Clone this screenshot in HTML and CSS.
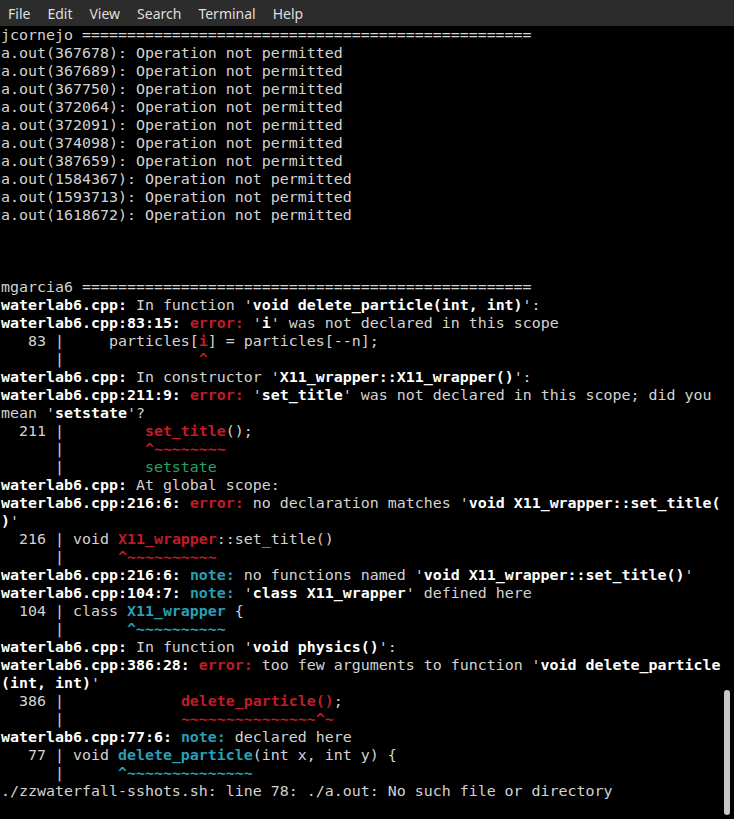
FILE: index.html
```html
<!DOCTYPE html>
<html lang="en">
<head>
  <meta charset="UTF-8">
  <meta name="viewport" content="width=device-width, initial-scale=1.0">
  <title>Terminal</title>
  <link rel="stylesheet" href="styles.css">
</head>
<body>
  <div class="window">
    <div class="menubar">
      <span class="menu-item">File</span>
      <span class="menu-item">Edit</span>
      <span class="menu-item">View</span>
      <span class="menu-item">Search</span>
      <span class="menu-item">Terminal</span>
      <span class="menu-item">Help</span>
    </div>
    <div class="terminal">
<div class="line">jcornejo ==================================================</div>
<div class="line">a.out(367678): Operation not permitted</div>
<div class="line">a.out(367689): Operation not permitted</div>
<div class="line">a.out(367750): Operation not permitted</div>
<div class="line">a.out(372064): Operation not permitted</div>
<div class="line">a.out(372091): Operation not permitted</div>
<div class="line">a.out(374098): Operation not permitted</div>
<div class="line">a.out(387659): Operation not permitted</div>
<div class="line">a.out(1584367): Operation not permitted</div>
<div class="line">a.out(1593713): Operation not permitted</div>
<div class="line">a.out(1618672): Operation not permitted</div>
<div class="line"> </div>
<div class="line"> </div>
<div class="line"> </div>
<div class="line">mgarcia6 ==================================================</div>
<div class="line"><b>waterlab6.cpp:</b> In function '<b>void delete_particle(int, int)</b>':</div>
<div class="line"><b>waterlab6.cpp:83:15:</b> <b class="red">error:</b> '<b>i</b>' was not declared in this scope</div>
<div class="line">   83 |     particles[<b class="red">i</b>] = particles[--n];</div>
<div class="line">      |               <b class="red">^</b></div>
<div class="line"><b>waterlab6.cpp:</b> In constructor '<b>X11_wrapper::X11_wrapper()</b>':</div>
<div class="line"><b>waterlab6.cpp:211:9:</b> <b class="red">error:</b> '<b>set_title</b>' was not declared in this scope; did you</div>
<div class="line">mean '<b>setstate</b>'?</div>
<div class="line">  211 |         <b class="red">set_title</b>();</div>
<div class="line">      |         <b class="red">^~~~~~~~~</b></div>
<div class="line">      |         <span class="green">setstate</span></div>
<div class="line"><b>waterlab6.cpp:</b> At global scope:</div>
<div class="line"><b>waterlab6.cpp:216:6:</b> <b class="red">error:</b> no declaration matches '<b>void X11_wrapper::set_title(</b></div>
<div class="line"><b>)</b>'</div>
<div class="line">  216 | void <b class="red">X11_wrapper</b>::set_title()</div>
<div class="line">      |      <b class="red">^~~~~~~~~~~</b></div>
<div class="line"><b>waterlab6.cpp:216:6:</b> <b class="cyan">note:</b> no functions named '<b>void X11_wrapper::set_title()</b>'</div>
<div class="line"><b>waterlab6.cpp:104:7:</b> <b class="cyan">note:</b> '<b>class X11_wrapper</b>' defined here</div>
<div class="line">  104 | class <b class="cyan">X11_wrapper</b> {</div>
<div class="line">      |       <b class="cyan">^~~~~~~~~~~</b></div>
<div class="line"><b>waterlab6.cpp:</b> In function '<b>void physics()</b>':</div>
<div class="line"><b>waterlab6.cpp:386:28:</b> <b class="red">error:</b> too few arguments to function '<b>void delete_particle</b></div>
<div class="line"><b>(int, int)</b>'</div>
<div class="line">  386 |             <b class="red">delete_particle()</b>;</div>
<div class="line">      |             <b class="red">~~~~~~~~~~~~~~~^~</b></div>
<div class="line"><b>waterlab6.cpp:77:6:</b> <b class="cyan">note:</b> declared here</div>
<div class="line">   77 | void <b class="cyan">delete_particle</b>(int x, int y) {</div>
<div class="line">      |      <b class="cyan">^~~~~~~~~~~~~~~</b></div>
<div class="line">./zzwaterfall-sshots.sh: line 78: ./a.out: No such file or directory</div>
    </div>
    <div class="scrollbar"></div>
  </div>
</body>
</html>
```

FILE: styles.css
```css
html, body {
  margin: 0;
  padding: 0;
  background: #000;
}
.window {
  position: relative;
  width: 734px;
  height: 819px;
  overflow: hidden;
  background: #000;
}
.menubar {
  height: 26px;
  display: flex;
  align-items: center;
  gap: 17px;
  padding-left: 8px;
  background: #2c2c2c;
  font-family: "Noto Sans", "Open Sans", sans-serif;
  font-size: 14px;
  color: #dfdfdf;
}
.terminal {
  padding-left: 1px;
  font-family: "DejaVu Sans Mono", monospace;
  font-size: 14.95px;
  line-height: 18px;
  color: #d3d3d3;
}
.line {
  white-space: pre;
  height: 18px;
}
.terminal b {
  font-weight: bold;
  color: #ffffff;
}
.terminal b.red {
  color: #c01c28;
}
.terminal b.cyan {
  color: #2a9fb4;
}
.green {
  color: #26a269;
}
.scrollbar {
  position: absolute;
  right: 4px;
  top: 690px;
  width: 6px;
  height: 125px;
  border-radius: 3px;
  background: #c8c8c8;
}
```
